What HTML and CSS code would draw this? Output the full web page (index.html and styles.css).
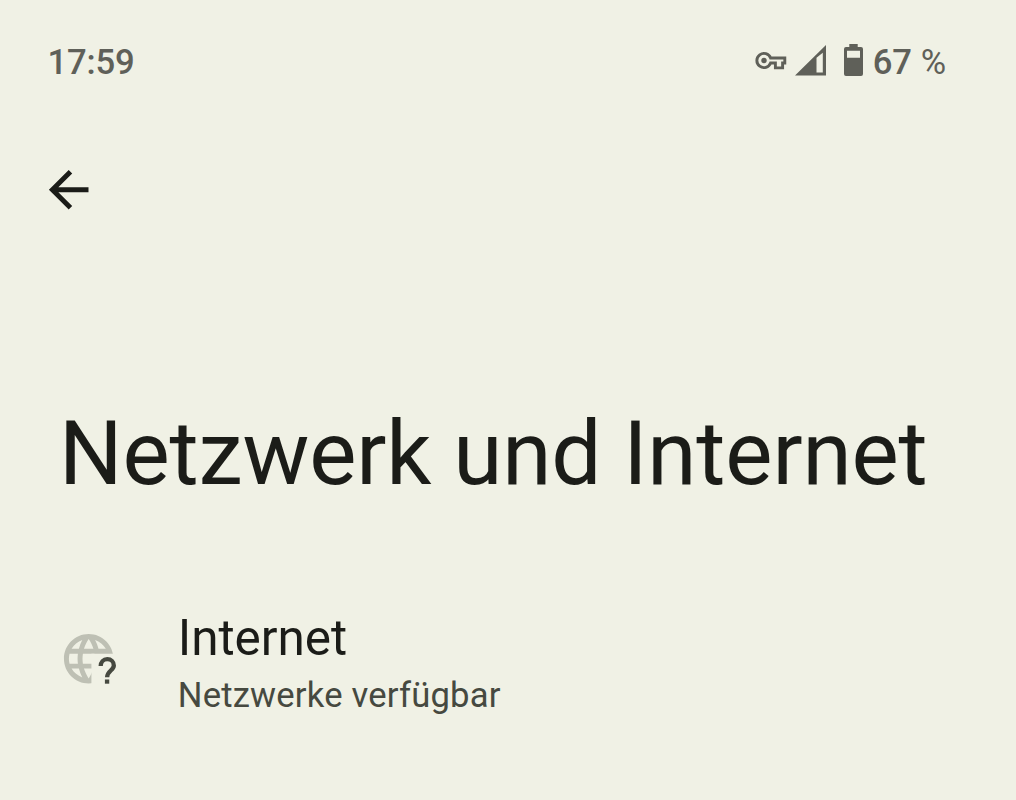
FILE: index.html
```html
<!DOCTYPE html>
<html lang="de">
<head>
    <meta charset="UTF-8" />
    <meta name="viewport" content="width=device-width, initial-scale=1.0"/>
    <title>Netzwerk und Internet</title>
    <link rel="stylesheet" href="styles.css">
</head>
<body>
    <header class="status-bar">
        <span class="clock">17:59</span>
        <div class="status-icons">
            <svg class="icon-key" viewBox="0 0 32 19">
                <path class="key-outline" d="M15.6 7H29.8v5h-2.2v4.9h-7.2V12h-4.8A7.1 7.1 0 1 1 15.6 7z"/>
                <circle cx="9" cy="9.5" r="2.7"/>
            </svg>
            <svg class="icon-signal" viewBox="0 0 31 31">
                <path fill-rule="evenodd" d="M0 30.5L31 0v30.5zM21.5 12.8v14.7h6.3V7.8z"/>
            </svg>
            <svg class="icon-battery" viewBox="0 0 19 32">
                <path fill-rule="evenodd" d="M5.3 0h8.4v3H17q2 0 2 2v25q0 2-2 2H2q-2 0-2-2V5q0-2 2-2h3.3zM3 6.8v7h13v-7z"/>
            </svg>
            <span class="battery-level">67 <span class="percent">%</span></span>
        </div>
    </header>

    <nav class="toolbar">
        <button class="btn-back" aria-label="Zurück">
            <svg viewBox="0 0 24 24">
                <path d="M20 11H7.83l5.59-5.59L12 4l-8 8 8 8 1.41-1.41L7.83 13H20v-2z"/>
            </svg>
        </button>
    </nav>

    <main class="settings">
        <h1 class="page-title">Netzwerk und Internet</h1>
        <section class="setting-item">
            <svg class="icon-globe" viewBox="0 0 24 24">
                <defs>
                    <clipPath id="globe-clip">
                        <path d="M0 0h24v10H13.1v14H0z"/>
                    </clipPath>
                </defs>
                <path class="globe" clip-path="url(#globe-clip)" d="M11.99 2C6.47 2 2 6.48 2 12s4.47 10 9.99 10C17.52 22 22 17.52 22 12S17.52 2 11.99 2zm6.93 6h-2.95c-.32-1.25-.78-2.45-1.38-3.56 1.84.63 3.37 1.91 4.33 3.56zM12 4.04c.83 1.2 1.48 2.53 1.91 3.96h-3.82c.43-1.43 1.08-2.76 1.91-3.96zM4.26 14C4.1 13.36 4 12.69 4 12s.1-1.36.26-2h3.38c-.08.66-.14 1.32-.14 2s.06 1.34.14 2H4.26zm.82 2h2.95c.32 1.25.78 2.45 1.38 3.56-1.84-.63-3.37-1.9-4.33-3.56zm2.95-8H5.08c.96-1.66 2.49-2.93 4.33-3.56C8.81 5.55 8.35 6.75 8.03 8zM12 19.96c-.83-1.2-1.48-2.53-1.91-3.96h3.82c-.43 1.43-1.08 2.76-1.91 3.96zM14.34 14H9.66c-.09-.66-.16-1.32-.16-2s.07-1.35.16-2h4.68c.09.65.16 1.32.16 2s-.07 1.34-.16 2z"/>
                <path class="mark" d="M16.85 15c0-1.6 1.1-2.85 2.65-2.85S22.15 13.3 22.15 14.7c0 2-2.7 2.25-2.7 4.8"/>
                <rect class="mark-dot" x="18.55" y="20.4" width="1.75" height="1.7"/>
            </svg>
            <div class="setting-text">
                <h2 class="setting-title">Internet</h2>
                <p class="setting-summary">Netzwerke verfügbar</p>
            </div>
        </section>
    </main>
</body>
</html>
```
FILE: styles.css
```css
* {
    margin: 0;
    padding: 0;
    box-sizing: border-box;
}

body {
    background-color: #f0f1e5;
    color: #1b1c18;
    font-family: Roboto, sans-serif;
    height: 100vh;
    overflow: hidden;
}

svg {
    display: block;
    fill: currentColor;
}

.status-bar {
    display: flex;
    justify-content: space-between;
    padding: 42.4px 70px 0 47.5px;
    color: #5f6059;
    font-size: 34.65px;
    font-weight: 500;
    line-height: 40px;
}

.clock {
    letter-spacing: -0.15px;
}

.percent {
    font-weight: 400;
}

.status-icons {
    display: flex;
    align-items: flex-start;
}

.icon-key {
    width: 32px;
    height: 19px;
    margin: 9px 8px 0 0;
}

.key-outline {
    fill: none;
    stroke: currentColor;
    stroke-width: 2.9;
}

.icon-signal {
    width: 31px;
    height: 31px;
    margin: 2.6px 18px 0 0;
}

.icon-battery {
    width: 19px;
    height: 32px;
    margin: 1.6px 10px 0 0;
}

.toolbar {
    padding: 77.6px 0 0 39px;
}

.btn-back {
    display: block;
    width: 59.4px;
    height: 59.4px;
    border: none;
    background: none;
    color: inherit;
    cursor: pointer;
}

.settings {
    padding: 182.6px 59px 0;
}

.page-title {
    font-size: 89.1px;
    font-weight: 400;
    letter-spacing: -0.17px;
    line-height: 104px;
    white-space: nowrap;
}

.setting-item {
    display: flex;
    gap: 59.4px;
    margin-top: 103.5px;
}

.icon-globe {
    width: 59.4px;
    height: 59.4px;
    margin-top: 20px;
    color: #464940;
}

.globe {
    fill: #bec0b4;
}

.mark {
    fill: none;
    stroke: currentColor;
    stroke-width: 1.75;
}

.setting-title {
    font-size: 49.5px;
    font-weight: 400;
    letter-spacing: -0.05px;
    line-height: 58px;
}

.setting-summary {
    margin-top: 8px;
    color: #464940;
    font-size: 34.65px;
    letter-spacing: 0.18px;
    line-height: 40px;
}
```
